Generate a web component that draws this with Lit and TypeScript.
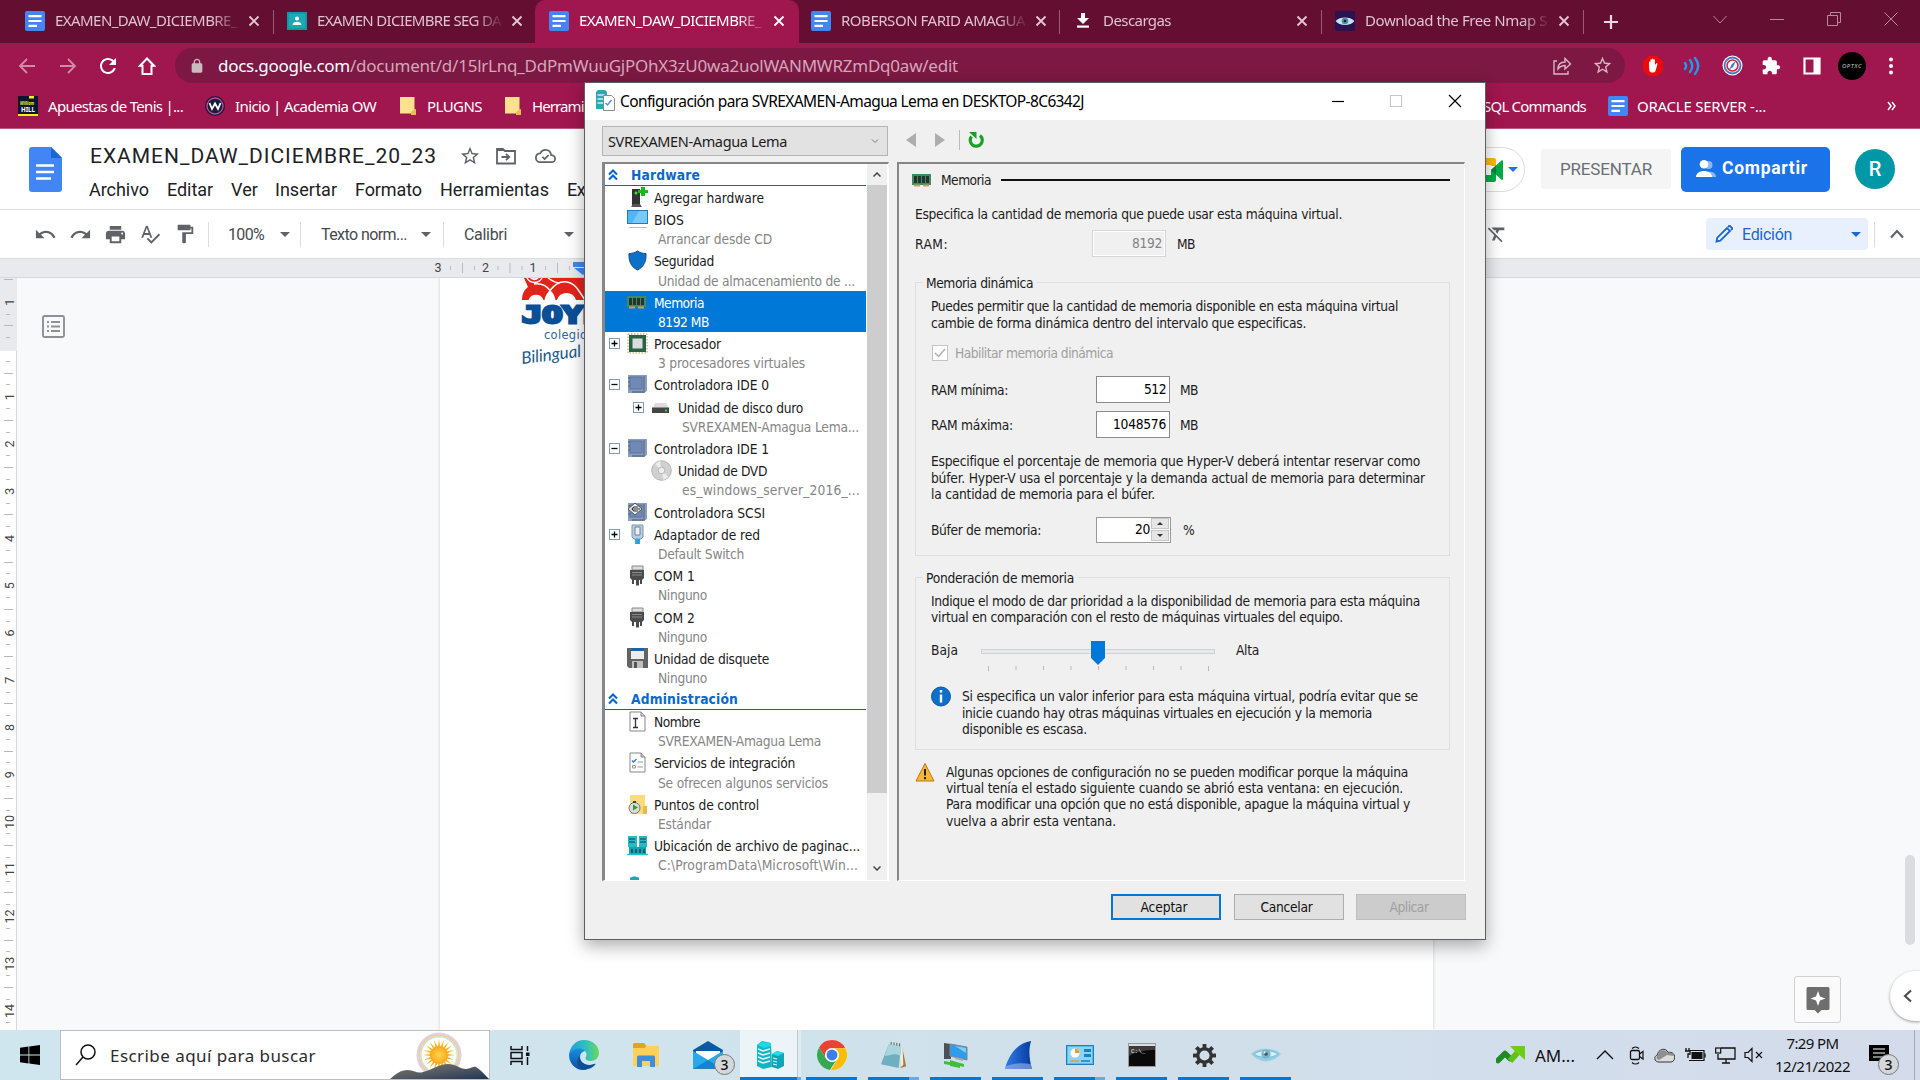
import { LitElement, html, svg, css } from "lit";
import { customElement, property, query } from "lit/decorators.js";

/* ---------- shared helpers ---------- */

/** Text run whose tracking is adjusted so that it occupies a given width. */
@customElement("fit-text")
class FitText extends LitElement {
  static styles = css`
    :host { display: inline-block; white-space: nowrap; }
    .run { display: inline-block; white-space: pre; }
  `;
  @property() text = "";
  @property({ type: Number }) w = 0;
  @query(".run") run!: HTMLElement;
  updated() {
    if (!this.w || !this.text.length) return;
    this.run.style.letterSpacing = "0px";
    const natural = this.run.getBoundingClientRect().width;
    this.run.style.letterSpacing = `${((this.w - natural) / this.text.length).toFixed(3)}px`;
  }
  render() {
    return html`<span class="run">${this.text}</span>`;
  }
}

const t = (text: string, w = 0) => html`<fit-text .text=${text} .w=${w}></fit-text>`;

const icon = (w: number, h: number, box: string, body: unknown) =>
  html`<svg width=${w} height=${h} viewBox=${box} fill="none">${body}</svg>`;

const mat = (size: number, d: string, fill: string) =>
  icon(size, size, "0 0 24 24", svg`<path d=${d} fill=${fill}/>`);

const P = {
  undo: "M12.5 8c-2.65 0-5.05.99-6.9 2.6L2 7v9h9l-3.62-3.62c1.39-1.16 3.16-1.88 5.12-1.88 3.54 0 6.55 2.31 7.6 5.5l2.37-.78C21.08 11.03 17.15 8 12.5 8z",
  redo: "M18.4 10.6C16.55 8.99 14.15 8 11.5 8c-4.65 0-8.58 3.03-9.96 7.22L3.9 16c1.05-3.19 4.05-5.5 7.6-5.5 1.95 0 3.73.72 5.12 1.88L13 16h9V7l-3.6 3.6z",
  print: "M19 8H5c-1.66 0-3 1.34-3 3v6h4v4h12v-4h4v-6c0-1.66-1.34-3-3-3zm-3 11H8v-5h8v5zm3-7c-.55 0-1-.45-1-1s.45-1 1-1 1 .45 1 1-.45 1-1 1zm-1-9H6v4h12V3z",
  spell: "M12.45 16h2.09L9.43 3H7.57L2.46 16h2.09l1.12-3h5.64l1.14 3zm-6.02-5L8.5 5.48 10.57 11H6.43zm15.16.59l-8.09 8.09L9.83 16l-1.41 1.41 5.09 5.09L23 13l-1.41-1.41z",
  paint: "M18 4V3c0-.55-.45-1-1-1H5c-.55 0-1 .45-1 1v4c0 .55.45 1 1 1h12c.55 0 1-.45 1-1V6h1v4H9v11c0 .55.45 1 1 1h2c.55 0 1-.45 1-1v-9h8V4h-3z",
  star: "M22 9.24l-7.19-.62L12 2 9.19 8.63 2 9.24l5.46 4.73L5.82 21 12 17.27 18.18 21l-1.63-7.03L22 9.24zM12 15.4l-3.76 2.27 1-4.28-3.32-2.88 4.38-.38L12 6.1l1.71 4.04 4.38.38-3.32 2.88 1 4.28L12 15.4z",
  puzzle: "M20.5 11H19V7c0-1.1-.9-2-2-2h-4V3.5C13 2.12 11.88 1 10.5 1S8 2.12 8 3.5V5H4c-1.1 0-1.99.9-1.99 2v3.8H3.5c1.49 0 2.7 1.21 2.7 2.7s-1.21 2.7-2.7 2.7H2V20c0 1.1.9 2 2 2h3.8v-1.5c0-1.49 1.21-2.7 2.7-2.7 1.49 0 2.7 1.21 2.7 2.7V22H17c1.1 0 2-.9 2-2v-4h1.5c1.38 0 2.5-1.12 2.5-2.5S21.88 11 20.5 11z",
  lock: "M18 8h-1V6c0-2.76-2.24-5-5-5S7 3.24 7 6v2H6c-1.1 0-2 .9-2 2v10c0 1.1.9 2 2 2h12c1.1 0 2-.9 2-2V10c0-1.1-.9-2-2-2zM9 8V6c0-1.66 1.34-3 3-3s3 1.34 3 3v2z",
  reload: "M17.65 6.35C16.2 4.9 14.21 4 12 4c-4.42 0-7.99 3.58-7.99 8s3.57 8 7.99 8c3.73 0 6.84-2.55 7.73-6h-2.08c-.82 2.33-3.04 4-5.65 4-3.31 0-6-2.69-6-6s2.69-6 6-6c1.66 0 3.14.69 4.22 1.78L13 11h7V4l-2.35 2.35z",
  clear: "M3.27 5L2 6.27l6.97 6.97L6.5 19h3l1.57-3.66L16.73 21 18 19.73 3.55 5.27 3.27 5zM6 5v.18L8.82 8h2.4l-.72 1.68 2.1 2.1L14.21 8H20V5H6z",
};

const docsIcon = icon(20, 20, "0 0 20 20", svg`
  <rect width="20" height="20" rx="2" fill="#4285f4"/>
  <path d="M3.5 5.2h13M3.5 10h13M3.5 14.8h8.5" stroke="#fff" stroke-width="2.2"/>`);
const downCaret = (c: string) => icon(10, 5, "0 0 10 5", svg`<path d="M0 0h10L5 5z" fill=${c}/>`);
const closeX = (c: string) => icon(12, 12, "0 0 12 12", svg`<path d="M1.5 1.5l9 9M10.5 1.5l-9 9" stroke=${c} stroke-width="1.8"/>`);
const eye = (size: number) => icon(size, size, "0 0 30 30", svg`
  <path d="M0 14C6 7 24 7 30 14c-4 4-6 5-8 5.500-4 2.500-10 2.500-14 0C6 19 4 18 0 14z" fill="#93cfe3"/>
  <path d="M3 14C9 9.500 21 9.500 27 14c-5 4.500-19 4.500-24 0z" fill="#d6eef6" stroke="#6fb3cb" stroke-width=".8"/>
  <circle cx="15" cy="14" r="4.600" fill="#7db4c8"/><circle cx="15" cy="14" r="1.800" fill="#2c5a6d"/>
  <circle cx="13.600" cy="12.500" r="1" fill="#fff"/>`);

/* ---------- browser chrome ---------- */

@customElement("browser-chrome")
class BrowserChrome extends LitElement {
  static styles = css`
    :host { display: block; height: 129px; background: #a0164f; color: #fff;
      font-family: "Noto Sans", "Open Sans", sans-serif; font-size: 15px; }
    svg { display: block; flex: none; }
    .strip { display: flex; height: 43px; padding-left: 12px; background: #640e32; }
    .tab { position: relative; box-sizing: border-box; width: 262px; height: 43px; display: flex; align-items: center;
      padding: 0 14px 2px 13px; color: #dfc3ce; }
    .tab.active { width: 264px; margin: 0 -1px; background: #a0164f; color: #fff; border-radius: 10px 10px 0 0; padding-left: 14px; }
    .tab.sep::after { content: ""; position: absolute; right: 0; top: 10px; width: 1px; height: 24px; background: #9b5a75; }
    .label { width: 184px; margin-left: 10px; margin-right: 10px; margin-top: -1px; white-space: nowrap;
      -webkit-mask-image: linear-gradient(90deg, #000 86%, rgba(0,0,0,.15) 99%); mask-image: linear-gradient(90deg, #000 86%, rgba(0,0,0,.15) 99%); }
    .fav { width: 20px; height: 20px; flex: none; display: grid; place-items: center; }
    .plus { margin-left: 19px; align-self: center; }
    .win { margin-left: auto; padding-right: 22px; display: flex; align-items: center; gap: 43px; height: 37px; }
    .bar { display: grid; grid-template-columns: 17px 41px 38px 40px 39px 1450px 17px 40px 40px 39px 42px 35px 47px 1fr;
      align-items: center; height: 45px; }
    .omni { height: 35px; border-radius: 18px; background: #7c1843; display: flex; align-items: center; padding-left: 14px; box-sizing: border-box; font-size: 17px; }
    .host { margin-left: 13px; }
    .path { color: #d3a7b9; }
    .omni .grow { flex: 1; }
    .omni .tail { display: flex; gap: 20px; padding-right: 12px; align-items: center; }
    .marks { display: grid; height: 41px; align-items: center; border-bottom: 1px solid #b85a80; padding-bottom: 5px; box-sizing: border-box;
      grid-template-columns: 18px 30px 157px 30px 165px 27px 78px 27px 951px 125px 29px 250px 1fr; }
    .avatar { width: 28px; height: 28px; border-radius: 50%; background: #000; display: grid; place-items: center; font-size: 6px; font-style: italic; color: #ccc; }
  `;
  private tab(fav: unknown, text: string, w: number, cls: string) {
    return html`<div class="tab ${cls}"><div class="fav">${fav}</div><div class="label">${t(text, w)}</div>${closeX(cls === "active" ? "#fff" : "#e3c9d3")}</div>`;
  }
  render() {
    const folder = icon(16, 18, "0 0 16 18", svg`<path d="M0 0h14.500v12.500H16V18H11v-1.500H0z" fill="#fce190"/><path d="M14.500 12.500H16V18h-5v-3z" fill="#e9bd4b"/>`);
    return html`
      <div class="strip">
        ${this.tab(docsIcon, "EXAMEN_DAW_DICIEMBRE_", 182, "sep")}
        ${this.tab(icon(20, 18, "0 0 20 18", svg`<rect width="20" height="18" fill="#12a4af"/><rect x="1" y="1" width="18" height="16" fill="#1ba9b5" stroke="#0d8f99"/><circle cx="10" cy="6.500" r="2" fill="#fff"/><path d="M5.500 13c0-4.500 9-4.500 9 0z" fill="#fff"/>`), "EXAMEN DICIEMBRE SEG DA", 184, "")}
        ${this.tab(docsIcon, "EXAMEN_DAW_DICIEMBRE_", 182, "active")}
        ${this.tab(docsIcon, "ROBERSON FARID AMAGUA", 184, "sep")}
        ${this.tab(icon(12, 15, "0 0 12 15", svg`<path d="M4 0h4v5h4L6 11 0 5h4z" fill="#fff"/><rect y="12.500" width="12" height="2.200" fill="#fff"/>`), "Descargas", 68, "sep")}
        ${this.tab(icon(20, 20, "0 0 30 30", svg`<rect width="30" height="30" rx="2" fill="#2a1250"/><path d="M1 15C7 8 23 8 29 15c-5 8-23 8-28 0z" fill="#c9e3ec"/><circle cx="15" cy="15" r="5" fill="#4d8da8"/><circle cx="15" cy="15" r="2" fill="#0c2230"/>`), "Download the Free Nmap S", 182, "sep")}
        <div class="plus">${icon(16, 16, "0 0 16 16", svg`<path d="M8 1v14M1 8h14" stroke="#ecd9e0" stroke-width="2.200"/>`)}</div>
        <div class="win">
          ${icon(14, 14, "0 0 14 14", svg`<path d="M.5 4L7 11l6.500-7" stroke="#b8889b"/>`)}
          ${icon(14, 14, "0 0 14 14", svg`<path d="M0 7.500h14" stroke="#b8889b"/>`)}
          ${icon(14, 14, "0 0 14 14", svg`<path d="M3.500 3V.5h10v10H11M.5 3.500h10v10H.5z" stroke="#b8889b"/>`)}
          ${icon(14, 14, "0 0 14 14", svg`<path d="M.5.500l13 13M13.500.500l-13 13" stroke="#b8889b"/>`)}
        </div>
      </div>
      <div class="bar">
        <span></span>
        ${icon(20, 20, "0 0 20 20", svg`<path d="M18 10H3M10 3l-7 7 7 7" stroke="#cf8ba7" stroke-width="1.800"/>`)}
        ${icon(20, 20, "0 0 20 20", svg`<path d="M2 10h15M10 3l7 7-7 7" stroke="#cf8ba7" stroke-width="1.800"/>`)}
        ${mat(24, P.reload, "#fff")}
        ${icon(20, 20, "0 0 20 20", svg`<path d="M11 2.500l7 7.200h-2.500V18h-9V9.700H4z" stroke="#fff" stroke-width="2"/>`)}
        <div class="omni">
          ${mat(16, P.lock, "#c8bcc1")}
          <span class="host">${t("docs.google.com", 132)}</span><span class="path">${t("/document/d/15lrLnq_DdPmWuuGjPOhX3zU0wa2uolWANMWRZmDq0aw/edit", 608)}</span>
          <span class="grow"></span>
          <span class="tail">
            ${icon(20, 20, "0 0 20 20", svg`<path d="M5 5H2v13h14v-3M6 13c0-5 3-7 7-7V2.500L18.500 8 13 13V9.500c-3 0-5 1-7 3.500z" stroke="#d9b6c4" stroke-width="1.400"/>`)}
            ${mat(21, P.star, "#d9b6c4")}
          </span>
        </div>
        <span></span>
        ${icon(22, 22, "0 0 22 22", svg`<path d="M6.500 1h9L21 6.500v9L15.500 21h-9L1 15.500v-9z" fill="#ec0b0b"/><path d="M7 12V7.200c0-1 1.400-1 1.400 0V5c0-1 1.500-1 1.500 0V4.200c0-1 1.500-1 1.500 0V5c0-1 1.500-1 1.500 0v5l1.300-1.500c.8-.6 1.600 0 1.200.8L13.500 16c-1 2-5 2-6 0z" fill="#fff"/>`)}
        ${icon(20, 18, "0 0 20 18", svg`<path d="M3 6c1.500 2 1.500 4 0 6M8 3c3 4 3 8 0 12M13 1c4 5 4 11 0 16" stroke="#1e9bf0" stroke-width="2.400" stroke-linecap="round"/>`)}
        ${icon(21, 21, "0 0 21 21", svg`<circle cx="10.500" cy="10.500" r="10" fill="#fff"/><circle cx="10.500" cy="10.500" r="8" stroke="#3f78c4" stroke-width="1.800"/><circle cx="10.500" cy="10.500" r="5.500" stroke="#d8243c" stroke-width="1.600"/><path d="M7 14.500l3-5.500 4-3-3 6z" fill="#3f78c4"/>`)}
        ${mat(20, P.puzzle, "#fff")}
        ${icon(18, 18, "0 0 18 18", svg`<path d="M1.500 1.500h15v15h-15z" stroke="#fff" stroke-width="2.200"/><rect x="10.500" y="1" width="6.500" height="16" fill="#fff"/>`)}
        <div class="avatar">${t("OPTXC", 20)}</div>
        ${icon(12, 18, "0 0 12 18", svg`<circle cx="6" cy="2.500" r="2" fill="#fff"/><circle cx="6" cy="9" r="2" fill="#fff"/><circle cx="6" cy="15.500" r="2" fill="#fff"/>`)}
      </div>
      <div class="marks">
        <span></span>
        ${icon(20, 20, "0 0 20 20", svg`<rect width="20" height="20" fill="#0b1730"/><rect y="18" width="20" height="2" fill="#f6ef1c"/><rect x="11" width="5" height="2.500" fill="#f6ef1c"/><text x="2" y="9" font-size="6" font-style="italic" font-weight="bold" fill="#f6ef1c" textLength="14" lengthAdjust="spacingAndGlyphs">William</text><text x="3" y="16" font-size="7.500" font-weight="bold" fill="#fff" textLength="14" lengthAdjust="spacingAndGlyphs">HILL</text>`)}
        ${t("Apuestas de Tenis |...", 135)}
        ${icon(20, 20, "0 0 20 20", svg`<circle cx="10" cy="10" r="10" fill="#1c1b3a"/><circle cx="10" cy="10" r="8" stroke="#c14f9d" stroke-width="1.300"/><path d="M4.500 7l2.500 6 3-5.500 3 5.500 2.500-6" stroke="#fff" stroke-width="1.800"/>`)}
        ${t("Inicio | Academia OW", 141)}
        ${folder}${t("PLUGNS", 55)}${folder}${t("Herramientas", 86)}
        ${t("SQL Commands", 103)}
        ${docsIcon}${t("ORACLE SERVER -...", 129)}
        ${icon(10, 10, "0 0 10 10", svg`<path d="M1 1l3 4-3 4M5 1l3 4-3 4" stroke="#fff" stroke-width="1.500"/>`)}
      </div>`;
  }
}

/* ---------- document editor ---------- */

@customElement("docs-view")
class DocsView extends LitElement {
  static styles = css`
    :host { display: flex; flex-direction: column; height: 901px; background: #fff; font-family: Roboto, sans-serif; color: #202124; }
    svg { display: block; flex: none; }
    .head { display: grid; grid-template-columns: 90px 1fr 465px; height: 80px; border-bottom: 1px solid #dadce0; }
    .logo { padding: 18px 0 0 29px; }
    .names { display: flex; flex-direction: column; }
    .title { display: grid; grid-template-columns: 369px 37px 39px 1fr; align-items: center; height: 32px; padding-top: 11px; font-size: 21px; }
    .menu { display: grid; grid-template-columns: 78px 64px 44px 80px 85px 127px 1fr; align-items: center; height: 34px; font-size: 18px; margin-left: -1px; }
    .acts { display: flex; align-items: flex-start; padding-top: 18px; height: 45px; }
    .pill { box-sizing: border-box; width: 70px; height: 45px; border: 1px solid #dadce0; border-radius: 23px; display: flex; align-items: center; justify-content: flex-end; padding-right: 6px; gap: 5px; }
    .present { box-sizing: border-box; width: 130px; height: 40px; margin: 2px 10px 0 16px; border-radius: 3px; background: #f5f5f5; color: #6b6f73; font-size: 17px; display: grid; place-items: center; padding-bottom: 1px; }
    .share { width: 149px; height: 45px; border-radius: 5px; background: #1a73e8; color: #fff; font-size: 17.500px; font-weight: 700; display: flex; align-items: center; justify-content: center; gap: 6px; box-sizing: border-box; padding-bottom: 3px; padding-right: 7px; }
    .me { width: 40px; height: 40px; border-radius: 50%; background: #0097a7; color: #fff; margin: 2px 0 0 25px; display: grid; place-items: center; font-size: 20px; font-weight: 500; }
    .tools { display: grid; align-items: center; height: 48px; border-bottom: 1px solid #dadce0; font-size: 16px; color: #474a4d;
      grid-template-columns: 34px 35px 35px 35px 35px 34px 20px 52px 20px 21px 100px 22px 21px 100px 922px 220px 163px 5px 15px 1fr; }
    .rule { width: 1px; height: 25px; background: #dadce0; }
    .edit { height: 32px; box-sizing: border-box; background: #e8f0fe; border-radius: 4px; color: #1967d2; display: flex; align-items: center; padding: 0 7px 0 9px; width: 162px; }
    .edit .gap { flex: 1; }
    .edit .word { margin-left: 9px; }
    .hruler { height: 18px; background: #e8eaed; border-bottom: 1px solid #d5d8dc; }
    .canvas { flex: 1; display: grid; grid-template-columns: 17px 423px 993px 1fr; background: #f8f9fb; min-height: 0; overflow: hidden; }
    .vruler { border-right: 1px solid #d5d8dc; background: #fff; }
    .outline { padding: 37px 0 0 25px; }
    .page { background: #fff; box-shadow: 0 0 3px #c9cbce; overflow: hidden; }
    .brand { margin-left: 80px; }
    .right { position: relative; }
    .thumb { position: absolute; right: 5px; top: 577px; width: 10px; height: 90px; border-radius: 5px; background: #dadce0; }
    .explore { position: absolute; left: 361px; top: 698px; width: 45px; height: 45px; border: 1px solid #cfd1d4; border-radius: 3px; background: #fafafa; display: grid; place-items: center; }
    .side { position: absolute; right: 0; top: 693px; width: 30px; height: 50px; border-radius: 25px 0 0 25px; background: #fff; box-shadow: 0 1px 3px #999; display: flex; align-items: center; }
    .side svg { margin-left: 13px; }
  `;
  private hRuler() {
    const out = [];
    for (let n = 1; n <= 3; n++) {
      const x = 580.5 - 47.5 * n;
      out.push(svg`<text x=${x} y="13" text-anchor="middle" font-size="12.500" fill="#444">${n}</text>
        <rect x=${x + 12} y="7" width="1" height="4" fill="#b8bbbf"/><rect x=${x + 24} y="4" width="1" height="10" fill="#b8bbbf"/><rect x=${x + 36} y="7" width="1" height="4" fill="#b8bbbf"/>`);
    }
    return icon(1920, 18, "0 0 1920 18", svg`${out}<path d="M573 3h20v5h-20zM574 9h18l-9 7z" fill="#4285f4"/>`);
  }
  private vRuler() {
    const out = [];
    for (let n = -1; n <= 14; n++) {
      const y = 71 + 47.25 * n;
      if (n !== 0) out.push(svg`<text transform=${`translate(13.5 ${y + 0.5}) rotate(-90)`} text-anchor="middle" font-size="12.500" fill="#444">${Math.abs(n)}</text>`);
      out.push(svg`<rect x="6" y=${Math.round(y + 11.8)} width="4" height="1" fill="#b5b8bc"/><rect x="4" y=${Math.round(y + 23.6)} width="9" height="1" fill="#b5b8bc"/><rect x="6" y=${Math.round(y + 35.4)} width="4" height="1" fill="#b5b8bc"/>`);
    }
    return icon(17, 752, "0 0 17 752", svg`<rect width="17" height="73" fill="#e8eaed"/><rect x="4" y="1" width="9" height="1" fill="#b5b8bc"/>${out}`);
  }
  render() {
    const g = "#5f6368";
    return html`
      <div class="head">
        <div class="logo">${icon(33, 45, "0 0 33 45", svg`<path d="M3 0h19l11 11v31a3 3 0 0 1-3 3H3a3 3 0 0 1-3-3V3a3 3 0 0 1 3-3z" fill="#4285f4"/><path d="M22 0l11 11H22z" fill="#1967d2"/><path d="M7 18.500h18M7 25h18M7 31.500h15" stroke="#fff" stroke-width="2.300"/>`)}</div>
        <div class="names">
          <div class="title">
            ${t("EXAMEN_DAW_DICIEMBRE_20_23", 347)}
            ${mat(22, P.star, g)}
            ${icon(20, 18, "0 0 20 18", svg`<path d="M1 2h6l2 2h10v12.500H1z" stroke=${g} stroke-width="1.800"/><path d="M1 1.500h6l2 2.500H1z" fill=${g}/><path d="M5.500 10H13M10 6.800L13.200 10 10 13.200" stroke=${g} stroke-width="1.800"/>`)}
            ${icon(21, 18, "0 2.500 24 19", svg`<path d="M18.500 11C18 7.500 15.300 5 12 5c-2.600 0-4.900 1.500-6 3.900C3.200 9.200 1 11.300 1 14c0 2.800 2.200 5 5 5h13c2.200 0 4-1.800 4-4s-2-4-4.500-4z" stroke=${g} stroke-width="2"/><path d="M8.500 13l2.500 2.500 4.500-4.500" stroke=${g} stroke-width="2"/>`)}
          </div>
          <div class="menu">${t("Archivo", 60)}${t("Editar", 46)}${t("Ver", 27)}${t("Insertar", 62)}${t("Formato", 67)}${t("Herramientas", 109)}${t("Extensiones", 93)}</div>
        </div>
        <div class="acts">
          <div class="pill">
            ${icon(28, 24, "0 0 28 24", svg`<path d="M0 7l7-7v7z" fill="#ea4335"/><path d="M0 7h7v10H0z" fill="#2684fc"/><path d="M7 0h12a2 2 0 0 1 2 2v6h-5V7H7z" fill="#ffba00"/><path d="M7 17h9v-5h5v10a2 2 0 0 1-2 2H7zM16 12l10.500-9.500c.7-.5 1.500 0 1.500 1V21c0 1-.8 1.300-1.500.7z" fill="#00ac47"/><path d="M16 12l5-4.500v9z" fill="#00832d"/>`)}
            ${downCaret("#1a73e8")}
          </div>
          <div class="present">${t("PRESENTAR", 92)}</div>
          <div class="share">
            ${icon(20, 17, "0 0 20 17", svg`<circle cx="12.500" cy="5" r="4" fill="#8ab8f6"/><path d="M8 17c0-7 12-7 12 0z" fill="#8ab8f6"/><circle cx="8" cy="4.300" r="4.300" fill="#fff"/><path d="M0 17c0-8 16-8 16 0z" fill="#fff"/>`)}
            ${t("Compartir", 86)}
          </div>
          <div class="me">R</div>
        </div>
      </div>
      <div class="tools">
        <span></span>
        ${mat(23, P.undo, g)}${mat(23, P.redo, g)}${mat(23, P.print, g)}${mat(22, P.spell, g)}${mat(22, P.paint, g)}
        <span class="rule"></span>${t("100%", 36)}${downCaret(g)}
        <span class="rule"></span>${t("Texto norm...", 86)}${downCaret(g)}
        <span class="rule"></span>${t("Calibri", 43)}${downCaret(g)}
        ${mat(22, P.clear, g)}
        <div class="edit">
          ${icon(18, 18, "0 0 18 18", svg`<path d="M1.500 16.500l.8-3.800L12 3l3 3-9.700 9.700zM13 2l1.500-1.500 3 3L16 5" stroke="#1967d2" stroke-width="1.800"/>`)}
          <span class="word">${t("Edición", 50)}</span><span class="gap"></span>${downCaret("#1967d2")}
        </div>
        <span></span>
        <span class="rule"></span>
        ${icon(16, 16, "0 0 16 16", svg`<path d="M2 11.500L8 5l6 6.500" stroke=${g} stroke-width="2.200"/>`)}
      </div>
      <div class="hruler">${this.hRuler()}</div>
      <div class="canvas">
        <div class="vruler">${this.vRuler()}</div>
        <div class="outline">${icon(23, 23, "0 0 23 23", svg`<rect x="1" y="1" width="21" height="21" rx="1.500" stroke="#8d9094" stroke-width="1.900"/><path d="M5 7h2M5 11.500h2M5 16h2M9 7h9M9 11.500h9M9 16h9" stroke="#8d9094" stroke-width="2"/>`)}</div>
        <div class="page">
          <div class="brand">${icon(120, 105, "0 0 120 105", svg`
            <path d="M4 0h90v22H2c0-6 2-10 6-13z" fill="#e2231a"/>
            <path d="M8.500 22a8 8 0 0 1 15 0zM37 22a10 10 0 0 1 19 0zM67 22a10 10 0 0 1 19 0z" fill="#fff"/>
            <path d="M24.500 22c1-5 3-8 5.500-9.500 3 1.500 4.500 5 5.500 9.500z" fill="#fff"/>
            <path d="M30 12.500C26 7 20 5 14 6M30 12.500C35 6 41 3 47 4s9 4 12 9l6 9M28 0c4 3 7 5 12 5" stroke="#fff" stroke-width="1.500"/>
            <path d="M7 0a8.500 8.500 0 0 0 15 0M11 0a5 5 0 0 0 7 0z" stroke="#fff" stroke-width="1.400"/>
            <path d="M0 0h3c1 4 2 6 4 8-4 3-6 8-6 14H0z" fill="#fff"/>
            <text x="2" y="45" font-family="DejaVu Sans Mono, monospace" font-weight="bold" font-size="23" fill="#0b4f96" stroke="#0b4f96" stroke-width="2.800" textLength="101" lengthAdjust="spacingAndGlyphs">JOYFE</text>
            <text x="24" y="61" font-family="DejaVu Sans, sans-serif" font-size="11.500" letter-spacing=".3" fill="#2f6496">colegio</text>
            <text transform="translate(2 86) rotate(-7)" font-family="Lato, sans-serif" font-style="italic" font-size="17" fill="#1c5a8c" textLength="60">Bilingual</text>`)}</div>
        </div>
        <div class="right">
          <div class="thumb"></div>
          <div class="explore">${icon(24, 28, "0 0 24 28", svg`<path d="M2 1h20a1.500 1.500 0 0 1 1.500 1.500v20A1.500 1.500 0 0 1 22 24h-6.500L12 27.500 8.500 24H2A1.500 1.500 0 0 1 .5 22.500v-20A1.500 1.500 0 0 1 2 1z" fill="#6e6e6e"/><path d="M12 5l2 5.500 5.500 2-5.500 2-2 5.500-2-5.500-5.500-2 5.500-2z" fill="#fff"/>`)}</div>
          <div class="side">${icon(9, 14, "0 0 9 14", svg`<path d="M8 1.500L2 7l6 5.500" stroke="#4a4d51" stroke-width="2.200"/>`)}</div>
        </div>
      </div>`;
  }
}

/* ---------- virtual machine settings window ---------- */

interface Row { icon: string; label: string; w: number; sub?: string; sw?: number; exp?: "+" | "-"; level?: number; sel?: boolean; }

const HARDWARE: Row[] = [
  { icon: "add", label: "Agregar hardware", w: 110 },
  { icon: "bios", label: "BIOS", w: 30, sub: "Arrancar desde CD", sw: 114 },
  { icon: "shield", label: "Seguridad", w: 60, sub: "Unidad de almacenamiento de ...", sw: 197 },
  { icon: "ram", label: "Memoria", w: 50, sub: "8192 MB", sw: 51, sel: true },
  { icon: "cpu", label: "Procesador", w: 67, sub: "3 procesadores virtuales", sw: 147, exp: "+" },
  { icon: "ide", label: "Controladora IDE 0", w: 115, exp: "-" },
  { icon: "disk", label: "Unidad de disco duro", w: 125, sub: "SVREXAMEN-Amagua Lema...", sw: 177, exp: "+", level: 1 },
  { icon: "ide", label: "Controladora IDE 1", w: 115, exp: "-" },
  { icon: "dvd", label: "Unidad de DVD", w: 89, sub: "es_windows_server_2016_...", sw: 178, level: 1 },
  { icon: "scsi", label: "Controladora SCSI", w: 111 },
  { icon: "net", label: "Adaptador de red", w: 106, sub: "Default Switch", sw: 86, exp: "+" },
  { icon: "com", label: "COM 1", w: 41, sub: "Ninguno", sw: 49 },
  { icon: "com", label: "COM 2", w: 41, sub: "Ninguno", sw: 49 },
  { icon: "floppy", label: "Unidad de disquete", w: 115, sub: "Ninguno", sw: 49 },
];
const ADMIN: Row[] = [
  { icon: "name", label: "Nombre", w: 46, sub: "SVREXAMEN-Amagua Lema", sw: 163 },
  { icon: "serv", label: "Servicios de integración", w: 141, sub: "Se ofrecen algunos servicios", sw: 170 },
  { icon: "check", label: "Puntos de control", w: 105, sub: "Estándar", sw: 53 },
  { icon: "page", label: "Ubicación de archivo de paginac...", w: 206, sub: "C:\\ProgramData\\Microsoft\\Win...", sw: 200 },
  { icon: "next", label: "", w: 0 },
];

const ramBody = svg`<rect y="4" width="19" height="11" fill="#3f8a63"/><path d="M2 6h3v7H2zM6 6h3v7H6zM10 6h3v7h-3zM14 6h3v7h-3z" fill="#25352e"/><path d="M2 14.500h6v2H2zM11 14.500h6v2h-6z" fill="#d59a55"/>`;
const ideBody = svg`<path d="M1 1h19v16l-3 2H1z" fill="#8a9ebd"/><rect x="3" y="3" width="12" height="12" fill="#6f8ab6" stroke="#5b729b"/><path d="M1 4h2M1 8h2M1 12h2M17 2v17" stroke="#4d5f80"/><path d="M5 17h12v2H5z" fill="#6b7b95"/>`;
const ICONS: Record<string, unknown> = {
  add: svg`<path d="M5 2h8v16H5z" fill="#333"/><path d="M6 17h7l2 3H4z" fill="#555"/><circle cx="9" cy="6" r="1.500" fill="#3be04a"/><path d="M14 0h4v3h3v3h-3v3h-4V6h-3V3h3z" fill="#1cb81c"/>`,
  bios: svg`<rect x=".5" y="1.500" width="20" height="13" fill="#4db8f5" stroke="#2579b4"/><path d="M12 2h8v12H5z" fill="#8bd2fa" opacity=".7"/><path d="M2 18.500h18" stroke="#b4bcc3" stroke-width="1"/>`,
  shield: svg`<path d="M10.500 1c3 2 5.500 2.500 8.500 2.500C19.500 11 17 17 10.500 20 4 17 1.500 11 2 3.500 5 3.500 7.500 3 10.500 1z" fill="#0a70c8" stroke="#155089"/>`,
  ram: ramBody,
  cpu: svg`<rect x="2" y="2" width="17" height="17" fill="#2b6145"/><rect x="5.500" y="5.500" width="10" height="10" fill="#dcdcdc"/><rect x="1" y="1" width="19" height="19" stroke="#b59b4f" stroke-dasharray="1.500 1.500"/>`,
  ide: ideBody,
  disk: svg`<path d="M4 6h11l3 5H2z" fill="#dcdcdc"/><rect x="1" y="10.500" width="17" height="5.500" fill="#454545"/><rect x="14" y="12.500" width="2" height="2" fill="#35d03a"/>`,
  dvd: svg`<circle cx="10.500" cy="10.500" r="9.800" fill="#d0d0d0" stroke="#b5b5b5"/><path d="M10.500 10.500L4 4l5-3.500zM10.500 10.500l7 6.500-5 3z" fill="#ececec"/><circle cx="10.500" cy="10.500" r="3.300" fill="#eee" stroke="#b7b7b7"/>`,
  scsi: svg`${ideBody}<path d="M8 1l7 6-7 6-7-6z" fill="#e9ecf1" stroke="#555"/><path d="M11 5H7L5 7l2 2h4M7 7h6" stroke="#333" stroke-width="1.200"/>`,
  net: svg`<path d="M5 1h11v12l-2 2H7l-2-2z" fill="#b8cce0" stroke="#7e97b3"/><path d="M8 3h5v8H8z" fill="#e9f0f7" stroke="#6f8296"/><path d="M8 15h5v5H8z" fill="#2fa3dd"/>`,
  com: svg`<path d="M5 1h11v4H5z" fill="#ddd" stroke="#888"/><path d="M3 5h14v8l-2 2H5l-2-2z" fill="#4b4b4b"/><path d="M5 7.500h10M5 10h10" stroke="#8a8a8a"/><path d="M5 15h2v4H5zM9 15h3v5.500H9zM13 15h2v4h-2z" fill="#4b4b4b"/>`,
  floppy: svg`<path d="M0 0h21v20H2l-2-2z" fill="#636363"/><rect x="4" y="0" width="13" height="3" fill="#1763b6"/><rect x="4" y="3" width="13" height="8" fill="#ececec"/><rect x="5" y="13" width="11" height="7" fill="#bfbfbf"/><rect x="7" y="14" width="3" height="6" fill="#555"/>`,
  name: svg`<path d="M3 1h11l4 4v15H3z" fill="#fff" stroke="#868686"/><path d="M14 1v4h4" fill="#ccc" stroke="#868686"/><path d="M6 7.500h5M6 16.500h5M8.500 7.500v9" stroke="#333" stroke-width="1.300"/>`,
  serv: svg`<path d="M3 1h11l4 4v15H3z" fill="#fff" stroke="#868686"/><path d="M14 1v4h4" fill="#ccc" stroke="#868686"/><path d="M5 8.500l1.500 1.500L9.500 7" stroke="#1f7ad1" stroke-width="1.300"/><path d="M10.500 10H16M10.500 15H16M5.500 13.500h3v2.500h-3z" stroke="#999"/>`,
  check: svg`<path d="M3 1h15v19H3z" fill="#fbdc7d"/><path d="M16 12h4v8h-4z" fill="#e7bd4f"/><circle cx="7.500" cy="14" r="5.500" fill="#dcdcdc" stroke="#777"/><path d="M6 10.500l5 3-5 3z" fill="#2aa12a"/><path d="M6 8h3" stroke="#444" stroke-width="2"/>`,
  page: svg`<path d="M1 1h9v11H1zM12 1h8v11h-8z" fill="#2bb9c4"/><path d="M2 4h6M2 7h6M13 4h6M13 7h6" stroke="#0c6d78" stroke-width="1.300"/><rect x="2" y="12" width="17" height="7" fill="#13a3b3"/><path d="M5 14v4M9 14v4M13 14v4M17 14v4" stroke="#0a5a66" stroke-width="1.800"/><path d="M0 19.500h21" stroke="#1fc5d3" stroke-width="1.500"/>`,
  next: svg`<path d="M3 2c2-2 7-2 9 0v10H3z" fill="#1fa5b3"/>`,
};

@customElement("vm-settings")
class VmSettings extends LitElement {
  static styles = css`
    :host { display: block; box-sizing: border-box; width: 902px; height: 858px; border: 1px solid #5e5e5e; background: #f0f0f0;
      box-shadow: 0 6px 16px rgba(0,0,0,.32); font-family: "DejaVu Sans Condensed", "DejaVu Sans", sans-serif; font-stretch: condensed; font-size: 13.700px; line-height: 16px; color: #1c1c1c; overflow: hidden; }
    svg { display: block; flex: none; }
    .seg { font-family: "Noto Sans", "Open Sans", sans-serif; font-stretch: normal; line-height: normal; }
    .bar { display: grid; grid-template-columns: 11px 24px 709px 58px 59px 1fr; align-items: center; height: 37px; background: #fff; font-size: 15.500px; color: #000; }
    .bar > * { margin-top: -2px; }
    .top { display: flex; align-items: center; height: 42px; padding-left: 17px; }
    .combo { box-sizing: border-box; width: 286px; height: 30px; border: 1px solid #b5b5b5; background: #e2e2e2; display: flex; align-items: center; justify-content: space-between; padding: 0 8px 0 5px; font-size: 14.500px; }
    .nav { display: flex; align-items: center; margin-left: 17px; padding-bottom: 2px; }
    .nav svg:nth-child(2) { margin-left: 17px; }
    .nav .rule { width: 1px; height: 20px; background: #bbb; margin: 0 8px 0 13px; }
    .body { display: flex; gap: 8px; height: 719px; padding-left: 17px; }
    .pane { box-sizing: border-box; border: solid; border-width: 2px 1px 1px 2px; border-color: #868686 #fff #fff #868686; height: 719px; }
    .left { width: 287px; display: flex; background: #fff; overflow: hidden; border-left-width: 3px; }
    .tree { width: 262px; overflow: hidden; }
    .cat { display: grid; grid-template-columns: 23px 1fr; align-items: center; height: 22px; border-bottom: 1.500px solid #0066c0; box-sizing: border-box; color: #0a68cc; font-weight: 700; padding-left: 3px; margin-right: 1px; }
    .row { display: grid; grid-template-columns: 18px 27px 1fr; grid-template-rows: 22.400px; margin-right: 1px; align-items: center; padding-left: 4px; }
    .row.two { grid-template-rows: 22.400px 18.900px; }
    .row.lv { padding-left: 28px; }
    .row.sel { background: #0078d7; color: #fff; }
    .lab1 { margin-top: 1px; }
    .sub { grid-column: 3; padding-left: 4px; color: #868686; align-self: start; height: 18px; display: flex; align-items: center; margin-top: -.5px; }
    .sel .sub { color: #fff; }
    .scroll { width: 20px; background: #f0f0f0; display: flex; flex-direction: column; align-items: center; }
    .scroll .knob { width: 20px; height: 608px; margin-top: 8px; background: #cdcdcd; }
    .scroll .up { margin-top: 8px; height: 5px; }
    .scroll .dn { margin-top: auto; margin-bottom: 9px; }
    .right { width: 568px; padding: 0 14px 0 16px; }
    .hd { display: grid; grid-template-columns: 29px 60px 1fr; margin-left: -3px; align-items: center; height: 32px; }
    .hd i { height: 1.500px; background: #111; }
    .ln { height: 16.300px; line-height: 16.300px; }
    .ln fit-text { vertical-align: top; }
    .f { display: grid; grid-template-columns: 165px 84px 1fr; align-items: center; height: 27px; }
    .in { box-sizing: border-box; width: 74px; height: 27px; border: 1px solid #8a8a8a; background: #fff; display: flex; align-items: center; justify-content: flex-end; padding: 0 3px 2px 0; color: #000; }
    .in.off { background: #f0f0f0; border: 1px solid #d6d6d6; box-shadow: inset 0 0 0 1px #fff; color: #838383; }
    .ram { margin-top: 8px; grid-template-columns: 177px 85px 1fr; }
    .grp { box-sizing: border-box; width: 535px; border: 1px solid #dfdfdf; padding-left: 15px; }
    .lg { display: block; width: max-content; height: 16px; line-height: 16px; margin: -8px 0 0 -8px; padding: 0 4px 0 3px; background: #f0f0f0; }
    .lg fit-text { vertical-align: top; }
    .g1 { margin-top: 25px; height: 274px; }
    .g2 { margin-top: 21px; height: 173px; }
    .m7 { margin-top: 6.500px; } .m8 { margin-top: 8px; } .m10 { margin-top: 10px; } .m14 { margin-top: 14.500px; } .m15 { margin-top: 15px; }
    .p1 { margin-top: 7px; } .p2 { margin-top: 15px; } .p3 { margin-top: 14px; }
    .chk { display: flex; align-items: center; gap: 7px; height: 16px; color: #a0a0a0; padding-left: 1px; }
    .spin { width: 75px; height: 26px; border-color: #9a9a9a; padding: 0 1px 0 0; gap: 1px; }
    .spin > fit-text { margin-top: -2px; }
    .btns { display: flex; flex-direction: column; gap: 1px; }
    .btns span { width: 18px; height: 11px; background: #e6e6e6; border: 1px solid #c6c6c6; box-sizing: border-box; display: grid; place-items: center; }
    .sl { display: grid; grid-template-columns: 45px 260px 1fr; height: 36px; margin-top: 12.500px; }
    .sl .lab { height: 25px; display: flex; align-items: center; }
    .note { display: grid; grid-template-columns: 31px 1fr; margin-top: 13.500px; }
    .grp .note { margin-top: 14.500px; }
    .note svg { margin-top: -2px; }
    .foot { display: flex; justify-content: flex-end; gap: 12.500px; padding: 13px 19px 0 0; }
    .btn { box-sizing: border-box; width: 110px; height: 26px; border: 1px solid #adadad; background: #e1e1e1; display: grid; place-items: center; padding-right: 4px; color: #111; }
    .btn.def { border: 2px solid #0078d7; }
    .btn.off { background: #cccccc; border-color: #bfbfbf; color: #a0a0a0; }
    .pct { padding-left: 3px; }
  `;
  private row(r: Row) {
    return html`<div class="row ${r.sub ? "two" : ""} ${r.level ? "lv" : ""} ${r.sel ? "sel" : ""}">
      ${r.exp ? icon(11, 11, "0 0 11 11", svg`<rect x=".5" y=".5" width="10" height="10" fill="#fff" stroke="#7f9db9"/><path d=${r.exp === "+" ? "M2.500 5.500h6M5.500 2.500v6" : "M2.500 5.500h6"} stroke="#000" stroke-width="1.300"/>`) : html`<span></span>`}
      ${icon(21, 21, "0 0 21 21", ICONS[r.icon])}
      <span class="lab1">${t(r.label, r.w)}</span>
      ${r.sub ? html`<span class="sub">${t(r.sub, r.sw)}</span>` : ""}
    </div>`;
  }
  private cat(name: string, w: number) {
    return html`<div class="cat">${icon(10, 12, "0 0 10 12", svg`<path d="M1 5.500l4-4 4 4M1 10.500l4-4 4 4" stroke="#0066cc" stroke-width="2"/>`)}${t(name, w)}</div>`;
  }
  private lines(items: [string, number][]) {
    return items.map(([s, w]) => html`<div class="ln">${t(s, w)}</div>`);
  }
  private field(label: string, lw: number, val: string, vw: number) {
    return html`<span>${t(label, lw)}</span><span class="in">${t(val, vw)}</span>${t("MB", 18)}`;
  }
  render() {
    const ticks = Array.from({ length: 9 }, (_, i) => svg`<rect x=${12 + i * 27.5} y="28" width="1" height=${i % 8 ? 4 : 5} fill="#b9b9b9"/>`);
    return html`
      <div class="bar seg">
        <span></span>
        ${icon(19, 21, "0 0 19 21", svg`<path d="M0 2l2-2h7l2 2v17H0z" fill="#2aa9b5"/><path d="M1.500 5h7M1.500 9h7M1.500 13h7" stroke="#c6f2f5" stroke-width="1.500"/><path d="M7.500 5.500h8l3 3v12h-11z" fill="#fff" stroke="#8a8a8a"/><path d="M9.500 13l2 2 4-5" stroke="#5b8fd0" stroke-width="1.500"/>`)}
        ${t("Configuración para SVREXAMEN-Amagua Lema en DESKTOP-8C6342J", 464)}
        <span>${icon(18, 14, "-3 0 18 14", svg`<path d="M0 7.500h12" stroke="#000" stroke-width="1.200"/>`)}</span>
        <span>${icon(18, 14, "-3 0 18 14", svg`<rect x=".5" y="1.500" width="11" height="11" stroke="#c6c6c6"/>`)}</span>
        <span>${icon(18, 14, "-3 0 18 14", svg`<path d="M0 1l12 12M12 1L0 13" stroke="#000" stroke-width="1.200"/>`)}</span>
      </div>
      <div class="top">
        <div class="combo seg">${t("SVREXAMEN-Amagua Lema", 179)}${icon(8, 5, "0 0 8 5", svg`<path d="M1 .5l3 3 3-3" stroke="#777"/>`)}</div>
        <div class="nav">
          ${icon(12, 14, "0 0 12 14", svg`<path d="M11 0v14L1 7z" fill="#adadad"/>`)}
          ${icon(12, 14, "0 0 12 14", svg`<path d="M1 0v14l10-7z" fill="#adadad"/>`)}
          <span class="rule"></span>
          ${icon(16, 16, "0 0 16 16", svg`<path d="M3.500 4.500a6 6 0 1 0 8.500-1" stroke="#18a126" stroke-width="3.200"/><path d="M1 0h7.500v7z" fill="#18a126"/>`)}
        </div>
      </div>
      <div class="body">
        <div class="pane left">
          <div class="tree">
            ${this.cat("Hardware", 69)}${HARDWARE.map((r) => this.row(r))}
            ${this.cat("Administración", 107)}${ADMIN.map((r) => this.row(r))}
          </div>
          <div class="scroll">
            <span class="up">${icon(8, 5, "0 0 8 5", svg`<path d="M.5 4.500L4 1l3.500 3.500" stroke="#444" stroke-width="1.500"/>`)}</span>
            <span class="knob"></span>
            <span class="dn">${icon(8, 5, "0 0 8 5", svg`<path d="M.5.500L4 4 7.500.500" stroke="#444" stroke-width="1.500"/>`)}</span>
          </div>
        </div>
        <div class="pane right">
          <div class="hd">${icon(19, 21, "0 0 19 21", ramBody)}${t("Memoria", 50)}<i></i></div>
          <div class="m10">${this.lines([["Especifica la cantidad de memoria que puede usar esta máquina virtual.", 427]])}</div>
          <div class="f ram"><span>${t("RAM:", 33)}</span><span class="in off">${t("8192", 30)}</span>${t("MB", 18)}</div>
          <div class="grp g1">
            <span class="lg">${t("Memoria dinámica", 107)}</span>
            <div class="p1">${this.lines([
              ["Puedes permitir que la cantidad de memoria disponible en esta máquina virtual", 467],
              ["cambie de forma dinámica dentro del intervalo que especificas.", 375]])}</div>
            <div class="chk m14">${icon(16, 16, "0 0 16 16", svg`<rect x=".5" y=".5" width="15" height="15" fill="#fff" stroke="#c4c4c4"/><path d="M3 8l3.500 3.500L13 4" stroke="#b0b0b0" stroke-width="1.500"/>`)}${t("Habilitar memoria dinámica", 158)}</div>
            <div class="f m15">${this.field("RAM mínima:", 77, "512", 22)}</div>
            <div class="f m8">${this.field("RAM máxima:", 82, "1048576", 53)}</div>
            <div class="p2">${this.lines([
              ["Especifique el porcentaje de memoria que Hyper-V deberá intentar reservar como", 489],
              ["búfer. Hyper-V usa el porcentaje y la demanda actual de memoria para determinar", 494],
              ["la cantidad de memoria para el búfer.", 224]])}</div>
            <div class="f p3"><span>${t("Búfer de memoria:", 110)}</span>
              <span class="in spin">${t("20", 15)}<span class="btns"><span>${icon(6, 3, "0 0 6 3", svg`<path d="M0 3h6L3 0z" fill="#333"/>`)}</span><span>${icon(6, 3, "0 0 6 3", svg`<path d="M0 0h6L3 3z" fill="#333"/>`)}</span></span></span>
              <span class="pct">${t("%", 13)}</span></div>
          </div>
          <div class="grp g2">
            <span class="lg">${t("Ponderación de memoria", 148)}</span>
            <div class="m7">${this.lines([
              ["Indique el modo de dar prioridad a la disponibilidad de memoria para esta máquina", 489],
              ["virtual en comparación con el resto de máquinas virtuales del equipo.", 412]])}</div>
            <div class="sl">
              <span class="lab">${t("Baja", 27)}</span>
              ${icon(250, 36, "0 0 250 36", svg`<rect x="5.500" y="11.500" width="233" height="4" fill="#e7eaea" stroke="#d2d2d2"/><path d="M115 3h14v17l-7 7-7-7z" fill="#0078d7"/>${ticks}`)}
              <span class="lab">${t("Alta", 23)}</span>
            </div>
            <div class="note">
              ${icon(20, 21, "0 0 20 21", svg`<circle cx="10" cy="10.500" r="9.500" fill="#0f6fc9" stroke="#0b569c"/><path d="M10 4v2.500M10 8.500v8" stroke="#fff" stroke-width="2.400"/>`)}
              <div>${this.lines([
                ["Si especifica un valor inferior para esta máquina virtual, podría evitar que se", 456],
                ["inicie cuando hay otras máquinas virtuales en ejecución y la memoria", 410],
                ["disponible es escasa.", 125]])}</div>
            </div>
          </div>
          <div class="note">
            ${icon(20, 20, "0 0 20 20", svg`<path d="M10 1.500L19 19H1z" fill="#f9b73a" stroke="#b9790f" stroke-linejoin="round"/><path d="M10 7v6.500M10 15v2.300" stroke="#222" stroke-width="2"/>`)}
            <div>${this.lines([
              ["Algunas opciones de configuración no se pueden modificar porque la máquina", 462],
              ["virtual tenía el estado siguiente cuando se abrió esta ventana: en ejecución.", 457],
              ["Para modificar una opción que no está disponible, apague la máquina virtual y", 464],
              ["vuelva a abrir esta ventana.", 170]])}</div>
          </div>
        </div>
      </div>
      <div class="foot">
        <div class="btn def">${t("Aceptar", 47)}</div><div class="btn">${t("Cancelar", 52)}</div><div class="btn off">${t("Aplicar", 39)}</div>
      </div>`;
  }
}

/* ---------- taskbar ---------- */

@customElement("task-bar")
class TaskBar extends LitElement {
  static styles = css`
    :host { display: flex; height: 50px; background: linear-gradient(90deg, #cfe6ee 0, #cfe4ec 700px, #d0dfea 1150px, #d2deec 1500px, #d4dbea 1920px);
      font-family: "Noto Sans", "Open Sans", sans-serif; color: #111; }
    svg { display: block; flex: none; }
    .start { width: 60px; display: grid; place-items: center; }
    .find { box-sizing: border-box; width: 430px; height: 50px; border: 1px solid #bdbdbd; background: #fff; display: flex; align-items: center; padding-left: 14px; font-size: 17px; color: #2b2b2b; }
    .find .q { margin-left: 14px; flex: 1; }
    .find .sky { align-self: flex-end; }
    .view { width: 63px; display: flex; align-items: center; padding-left: 20px; box-sizing: border-box; }
    .app { box-sizing: border-box; width: 62px; height: 50px; display: flex; flex-direction: column; align-items: center; position: relative; }
    .app .pic { height: 50px; display: grid; place-items: center; }
    .line { position: absolute; left: 5px; bottom: 0; width: 51px; height: 3px; background: #0078d7; }
    .line.more { background: linear-gradient(90deg, #0078d7 80%, #6aa9e4 80%); }
    .on { background: linear-gradient(90deg, #ecf4f7 57px, #b9ccd4 57px 58px, #dfedf2 58px); width: 61px; margin-right: 1px; margin-left: 1px; }
    .on + .app { margin-left: -1px; }
    .on .line { left: 0; width: 61px; background: linear-gradient(90deg, #0078d7 57px, #6aa9e4 57px); }
    .badge { position: absolute; box-sizing: border-box; width: 21px; height: 21px; border: 1px solid #777; border-radius: 50%; background: #d4d8da; font-size: 14px; line-height: 19px; text-align: center; font-weight: 500; }
    .mail .badge { left: 37px; top: 24px; }
    .sys { margin-left: auto; display: grid; grid-template-columns: 39px 61px 33px 25px 31px 30px 29px 29px 79px 62px 6px; align-items: center; width: 424px; }
    .clock { display: flex; flex-direction: column; align-items: center; font-size: 15px; line-height: 23px; margin-top: -1px; }
    .bell { position: relative; padding-left: 17px; }
    .bell .badge { left: 26px; top: 9px; }
    .desk { height: 50px; border-left: 1px solid #a3abb8; }
    .news { font-size: 17px; margin-top: 1px; }
  `;
  private app(pic: unknown, line = "line") {
    return html`<div class="app"><div class="pic">${pic}</div><div class=${line}></div></div>`;
  }
  render() {
    const rays = Array.from({ length: 20 }, (_, i) => svg`<path d="M49 8l1.500 10h-3z" fill="#fbb62d" transform=${`rotate(${i * 18} 49 24)`}/>`);
    const teeth = Array.from({ length: 8 }, (_, i) => svg`<rect x="10" y="0" width="4" height="6" fill="#333" transform=${`rotate(${i * 45} 12 12)`}/>`);
    return html`
      <div class="start">${icon(20, 20, "0 0 20 20", svg`<path d="M0 2.800l8.500-1.200v7.900H0zM9.300 1.500L20 0v9.500H9.300zM0 10.400h8.500v8L0 17.200zM9.300 10.400H20V20L9.300 18.500z" fill="#000"/>`)}</div>
      <div class="find">
        ${icon(21, 22, "0 0 21 22", svg`<circle cx="13" cy="8" r="7" stroke="#111" stroke-width="1.500"/><path d="M8 13L1 21" stroke="#111" stroke-width="1.500"/>`)}
        <span class="q">${t("Escribe aquí para buscar", 206)}</span>
        <span class="sky">${icon(99, 48, "0 0 99 48", svg`
          <defs><linearGradient id="m" x1="0" x2="1" y1="0" y2="1"><stop offset="0" stop-color="#86746a"/><stop offset=".5" stop-color="#545a62"/><stop offset="1" stop-color="#1d3557"/></linearGradient>
          <radialGradient id="s"><stop offset="0" stop-color="#ffd550"/><stop offset="1" stop-color="#f8a81c"/></radialGradient></defs>
          <circle cx="49" cy="24" r="21.500" stroke="#d9d3ef" stroke-width="2"/><circle cx="49" cy="24" r="19.800" stroke="#f9c89a" stroke-width="2"/><circle cx="49" cy="24" r="18.200" stroke="#c6e6d2" stroke-width="1.500"/>
          ${rays}<circle cx="49" cy="24" r="9" fill="url(#s)"/>
          <path d="M0 48c6-5 10-9 18-9 6 0 9 4 15 2 9-2 16-8 25-8 8 0 12 5 18 5 5 0 7-3 10-2 5 3 8 7 13 12z" fill="url(#m)"/>`)}</span>
      </div>
      <div class="view">${icon(21, 19, "0 0 21 19", svg`<path d="M1 0v3.500h11V0M1 19v-3.500h11V19M1 6.500h11v6H1z" stroke="#111" stroke-width="1.500"/><path d="M17.500 0v5M17.500 11v8" stroke="#111" stroke-width="1.500"/><rect x="16" y="6.500" width="3.500" height="3.500" fill="#111"/>`)}</div>
      <div class="app"><div class="pic">${icon(30, 30, "0 0 30 30", svg`
        <defs><linearGradient id="e1" x1="0" x2="1"><stop offset="0" stop-color="#1f9fe0"/><stop offset=".6" stop-color="#35c1b8"/><stop offset="1" stop-color="#6bd95b"/></linearGradient><linearGradient id="e2" x1="0" y1="0" x2="0" y2="1"><stop offset="0" stop-color="#1a8ee0"/><stop offset="1" stop-color="#0c4fa0"/></linearGradient></defs>
        <path d="M0 15C1 6 7 0 15 0c9 0 15 6 15 13 0 5-4 8-8.500 8-3 0-5-1-5-3 0-1 1-1.500 1-3.500 0-3-3-5.500-7-5.500C5 9 1 11 0 15z" fill="url(#e1)"/>
        <path d="M0 15c.5-4 5-6.500 10-6.500 3 0 5 1 6 2.500-3 .5-5 3-5 6 0 6 6 9.500 13 7.500-2.500 3.500-6 5.500-10 5.500C6 30 0 23 0 15z" fill="url(#e2)"/>
        <path d="M11 16c-1 6 6 11 14 8 2-.8 1.500 0 1 1-3 3.500-8 5-12.500 4C7 27 7 19 11 16z" fill="#0d4f94"/>`)}</div></div>
      <div class="app"><div class="pic">${icon(28, 24, "0 0 28 24", svg`<path d="M1 2c0-1 .5-2 1.500-2H12l2.500 3H27v20H1z" fill="#ffd257"/><path d="M1 2c0-1 .5-2 1.500-2H12l2.500 3-2 2H1z" fill="#e5a02a"/><path d="M5 24V14a1.500 1.500 0 0 1 1.500-1.500h15A1.500 1.500 0 0 1 23 14v10h-5v-6h-8v6z" fill="#3f8ed8"/>`)}</div></div>
      <div class="app mail"><div class="pic">${icon(30, 28, "0 0 30 28", svg`<path d="M0 9L15 0l15 9v3H0z" fill="#0c59a4"/><path d="M3 10h24v10H3z" fill="#fff"/><path d="M0 10l15 9 15-9v18H0z" fill="#29a8ea"/><path d="M0 28l15-9 15 9z" fill="#1583cf"/>`)}</div><span class="badge">3</span></div>
      <div class="app on"><div class="pic">${icon(29, 28, "0 0 29 28", svg`<path d="M1 4l5-4 9 2 1 24-9 2-6-3z" fill="#12b5c5"/><path d="M6 1l9 1v3L8 7 1 4z" fill="#17dbe6"/><path d="M2 8l5 2 7-2M2 12l5 2 7-2M2 16l5 2 7-2M2 20l5 2 7-2" stroke="#e3fbfd" stroke-width="1.500"/><path d="M16 13l5-3 7 2v13l-6 3-6-2z" fill="#0fa7b8"/><path d="M16 13l5-3 7 2-6 3z" fill="#1fe0ec"/><path d="M17 17l4 1M17 20l4 1M17 23l4 1" stroke="#e3fbfd"/>`)}</div><div class="line"></div></div>
      ${this.app(icon(30, 30, "0 0 48 48", svg`<circle cx="24" cy="24" r="24" fill="#fff"/><path d="M24 13h21.300A24 24 0 0 0 3.200 12l11.300 17.500A11 11 0 0 1 24 13z" fill="#ea4335"/><path d="M3.200 12a24 24 0 0 0 17.500 35.800L31 32.500a11 11 0 0 1-16.500-3z" fill="#34a853"/><path d="M45.300 13H24a11 11 0 0 1 9.500 16.500L22 48A24 24 0 0 0 45.300 13z" fill="#fbbc05"/><circle cx="24" cy="24" r="11" fill="#fff"/><circle cx="24" cy="24" r="8.700" fill="#3b7ded"/>`))}
      ${this.app(icon(28, 28, "0 0 28 30", svg`<path d="M22 3l5 24-6 2z" fill="#a9793c"/><path d="M20 3l3 .5 1 22-3 3z" fill="#efece2"/><path d="M9 2l13 1.500L19 29 0 25z" fill="#6fb0be"/><path d="M9 2l13 1.500-1.500 12C14 12 8 16 4 16z" fill="#a9d6de"/><path d="M9 1l14 2v2L9 3.500z" fill="#d9dde0"/><path d="M11 1v3M14 1.500v3M17 2v3M20 2.500v3" stroke="#555"/>`), "line more")}
      ${this.app(icon(26, 26, "0 0 26 26", svg`<path d="M1 1l7 1v15H1z" fill="#4a5157"/><path d="M7 2l17 3v13L7 14z" fill="#2f9cea" stroke="#7a8893"/><path d="M12 4l11 2v5z" fill="#83cbf8"/><path d="M12 16l8 2" stroke="#aaa" stroke-width="2"/><path d="M1 19l6 1v3l-6-1zM7 18l10 3v5L7 24zM17 21l4 1v3l-4-1z" fill="#3cbf3a"/>`))}
      ${this.app(icon(29, 28, "0 0 29 30", svg`<defs><linearGradient id="w" x1="0" x2="1"><stop offset="0" stop-color="#2f7de8"/><stop offset="1" stop-color="#063a9e"/></linearGradient></defs><path d="M0 30C4 14 14 2 28 0c-3 9-2 20 1 30z" fill="url(#w)"/><path d="M1 27c8-3 18-4 27-2l1 5H0z" fill="#9db8ea" opacity=".6"/>`))}
      ${this.app(icon(28, 20, "0 0 28 20", svg`<rect x=".5" y=".5" width="27" height="19" fill="#56bdf2" stroke="#1d7fbb"/><rect x="2" y="2" width="24" height="16" fill="#8ad4f8"/><circle cx="9" cy="8" r="4.500" fill="#fff"/><path d="M9 8V3.500A4.500 4.500 0 0 1 13.500 8z" fill="#f39a1e"/><path d="M18 4h7v3h-7zM18 9h7v3h-7z" fill="#1d7fbb"/><path d="M4 16h9" stroke="#f39a1e" stroke-width="1.500"/><path d="M15 16h9" stroke="#1d7fbb" stroke-width="1.500"/>`), "line more")}
      ${this.app(icon(28, 24, "0 0 28 24", svg`<rect x=".5" y=".5" width="27" height="23" fill="#0a0a0a" stroke="#9a9a9a"/><rect x="1" y="1" width="26" height="2" fill="#ddd"/><path d="M1 13c8-5 18-6 26-6V3H1z" fill="#3c3c3c"/><text x="3" y="9.500" font-size="6" font-family="Liberation Mono" fill="#eee">C:\\_</text>`))}
      ${this.app(icon(23, 23, "0 0 24 24", svg`${teeth}<circle cx="12" cy="12" r="7" stroke="#333" stroke-width="3.400"/>`))}
      ${this.app(eye(30))}
      <div class="sys">
        ${icon(30, 18, "0 0 30 18", svg`<path d="M2 14.500l7-7 5 5" stroke="#1f8a24" stroke-width="5.500" stroke-linecap="round" stroke-linejoin="round"/><path d="M14 15l9-10" stroke="#5ec21a" stroke-width="6"/><path d="M14 0h15v14L23.500 9 19 5.500z" fill="#6fce12"/>`)}
        <span class="news">${t("AM...", 40)}</span>
        ${icon(18, 10, "0 0 18 10", svg`<path d="M1 9l8-8 8 8" stroke="#111" stroke-width="1.400"/>`)}
        ${icon(16, 19, "0 0 16 19", svg`<rect x="1.500" y="4.500" width="9" height="9" rx="1.500" stroke="#111" stroke-width="1.300"/><path d="M10.500 8l3.500-2.500v7.500l-3.500-2.500M3 2.500C5 .5 8 .5 10 2.500M3 16.500c2 2 5 2 7 0" stroke="#111" stroke-width="1.200"/>`)}
        ${icon(22, 15, "0 0 22 15", svg`<path d="M5 14c-5 0-5.500-6-1.500-7C4 1 12-1 14 4.500c4-1 7 1.500 6.500 5 0 3-1.500 4.500-4 4.500z" fill="#dcdcdc" stroke="#333"/><path d="M4 7c1-6 8-6 9.500-2C17 4 19 5 20 8l-7-1-8 5c-2 0-4-3-1-5z" fill="#8f8f8f"/>`)}
        ${icon(21, 16, "0 0 21 16", svg`<path d="M5 3.500h14v10H4" stroke="#111" stroke-width="1.200"/><rect x="6.500" y="5" width="11" height="7" fill="#111"/><path d="M20 6.500v4M1 1v3M4 1v3M0 4h5v3H3v4" stroke="#111" stroke-width="1.300"/>`)}
        ${icon(21, 17, "0 0 21 17", svg`<path d="M6 1h14v11H3V7M11 12v4M7 16h8" stroke="#111" stroke-width="1.300"/><rect x=".7" y="1" width="5" height="5" stroke="#111" stroke-width="1.200"/>`)}
        ${icon(20, 16, "0 0 20 16", svg`<path d="M1 5.500h3l4-4v13l-4-4H1z" stroke="#111" stroke-width="1.200"/><path d="M12 5l6 6M18 5l-6 6" stroke="#111" stroke-width="1.200"/>`)}
        <span class="clock"><span>${t("7:29 PM", 52)}</span><span>${t("12/21/2022", 75)}</span></span>
        <span class="bell">${icon(20, 20, "0 0 20 20", svg`<path d="M0 0h20v16h-7l-3 3v-3H0z" fill="#000"/><path d="M4 4h12M4 8h12M4 12h12" stroke="#fff" stroke-width="1"/>`)}<span class="badge">3</span></span>
        <span class="desk"></span>
      </div>`;
  }
}

@customElement("app-root")
class AppRoot extends LitElement {
  static styles = css`
    :host { display: block; position: relative; width: 1920px; height: 1080px; overflow: hidden; }
    .dialog { position: absolute; left: 584px; top: 82px; }
  `;
  render() {
    return html`<browser-chrome></browser-chrome><docs-view></docs-view><task-bar></task-bar>
      <vm-settings class="dialog"></vm-settings>`;
  }
}
